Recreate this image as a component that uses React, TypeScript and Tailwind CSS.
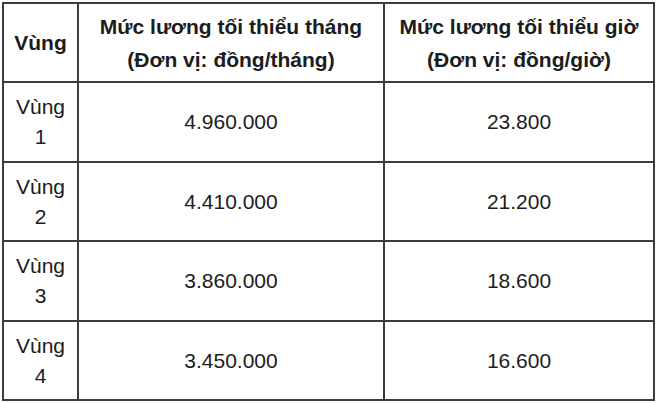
import React from "react";

const rows = [
  { v: "1", m: "4.960.000", h: "23.800", hgt: "h-[80px]" },
  { v: "2", m: "4.410.000", h: "21.200", hgt: "h-[79px]" },
  { v: "3", m: "3.860.000", h: "18.600", hgt: "h-[80px]" },
  { v: "4", m: "3.450.000", h: "16.600", hgt: "h-[79px]" },
];

export default function App() {
  return (
    <div
      className="w-[660px] h-[403px] bg-white pt-[2px] pl-[2px] text-[#1c1c1c] text-[21px] leading-[30px]"
      style={{ fontFamily: '"Liberation Sans", Arial, sans-serif' }}
    >
      <div className="grid grid-cols-[75px_306px_270px] w-[653px] border-t-2 border-l-2 border-[#3c3c3c]">
        <div className="h-[79px] border-r-2 border-b-2 border-[#3c3c3c] flex items-center justify-center font-bold text-center">
          Vùng
        </div>
        <div className="h-[79px] border-r-2 border-b-2 border-[#3c3c3c] flex items-center justify-center font-bold text-center leading-[33px]">
          <div>
            Mức lương tối thiểu tháng
            <br />
            (Đơn vị: đồng/tháng)
          </div>
        </div>
        <div className="h-[79px] border-r-2 border-b-2 border-[#3c3c3c] flex items-center justify-center font-bold text-center leading-[33px]">
          <div>
            Mức lương tối thiểu giờ
            <br />
            (Đơn vị: đồng/giờ)
          </div>
        </div>
        {rows.map((r) => (
          <React.Fragment key={r.v}>
            <div className={`${r.hgt} border-r-2 border-b-2 border-[#3c3c3c] flex items-center justify-center text-center`}>
              <div>
                Vùng
                <br />
                {r.v}
              </div>
            </div>
            <div className={`${r.hgt} border-r-2 border-b-2 border-[#3c3c3c] flex items-center justify-center`}>
              {r.m}
            </div>
            <div className={`${r.hgt} border-r-2 border-b-2 border-[#3c3c3c] flex items-center justify-center`}>
              {r.h}
            </div>
          </React.Fragment>
        ))}
      </div>
    </div>
  );
}
